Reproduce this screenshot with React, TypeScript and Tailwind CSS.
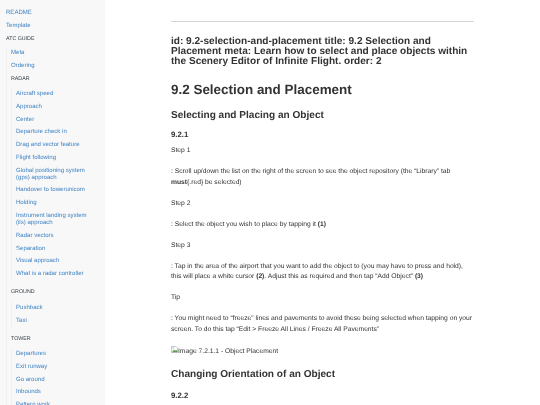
import React from 'react';

const NavLink: React.FC<{ label: string }> = ({ label }) => (
  <li className="py-[2.9px] leading-[7px] text-[6.05px] text-[#4183c4]">{label}</li>
);

const NavHeader: React.FC<{ label: string }> = ({ label }) => (
  <li className="py-[2.9px] leading-[7px] text-[5.3px] uppercase text-[#364149]">{label}</li>
);

const radarItems = [
  'Aircraft speed',
  'Approach',
  'Center',
  'Departure check in',
  'Drag and vector feature',
  'Flight following',
  'Global positioning system (gps) approach',
  'Handover to towerunicom',
  'Holding',
  'Instrument landing system (ils) approach',
  'Radar vectors',
  'Separation',
  'Visual approach',
  'What is a radar controller',
];

const towerItems = ['Departures', 'Exit runway', 'Go around', 'Inbounds', 'Pattern work'];

const Sidebar = () => (
  <aside className="w-[105px] shrink-0 h-full overflow-hidden bg-[#f8f8f8] pt-[7.5px] pl-[6px] pr-[17px]">
    <ul className="flex flex-col">
      <NavLink label="README" />
      <NavLink label="Template" />
      <NavHeader label="ATC Guide" />
      <ul className="mt-[1.75px] pl-[4px] border-l border-[#f0f0f0]">
        <NavLink label="Meta" />
        <NavLink label="Ordering" />
        <NavHeader label="Radar" />
        <ul className="mt-[2.2px] pl-[4px] border-l border-[#f0f0f0]">
          {radarItems.map((item) => (
            <NavLink key={item} label={item} />
          ))}
        </ul>
        <div className="h-[5px]" />
        <NavHeader label="Ground" />
        <ul className="mt-[3.25px] pl-[4px] border-l border-[#f0f0f0]">
          <NavLink label="Pushback" />
          <NavLink label="Taxi" />
        </ul>
        <div className="h-[5px]" />
        <NavHeader label="Tower" />
        <ul className="mt-[2.75px] pl-[4px] border-l border-[#f0f0f0]">
          {towerItems.map((item) => (
            <NavLink key={item} label={item} />
          ))}
        </ul>
      </ul>
    </ul>
  </aside>
);

const BrokenImage = () => (
  <svg width="7" height="7" viewBox="0 0 16 16" className="inline-block align-baseline">
    <path d="M1 1h10l4 4v10H1z" fill="#fff" stroke="#a0a0a0" strokeWidth="1.4" />
    <path d="M2 14l5-6 3 3 2-2 3 3v2H2z" fill="#5fa04e" />
    <path d="M3 3h4v3H3z" fill="#a8c8f0" />
  </svg>
);

const Para: React.FC<{ children: React.ReactNode }> = ({ children }) => (
  <p className="mb-[10.25px] text-[6.72px] leading-[10.75px] text-[#333]">{children}</p>
);

export default function App() {
  return (
    <div className="font-['Liberation_Sans',Arial,sans-serif] [text-rendering:geometricPrecision] blur-[0.4px] flex w-[540px] h-[405px] overflow-hidden bg-white">
      <Sidebar />
      <main className="flex-1 overflow-hidden pl-[66px] pr-[66px] pt-[21px]">
        <hr className="border-0 h-[1px] bg-[#d4d4d4] mb-[14.6px]" />
        <h2 className="text-[10.08px] leading-[10.3px] font-bold text-[#333] mb-[13.25px]">
          id: 9.2-selection-and-placement title: 9.2 Selection and Placement meta: Learn how to select and place objects within the Scenery Editor of Infinite Flight. order: 2
        </h2>
        <h1 className="text-[13.44px] leading-[18px] font-bold text-[#333] mb-[10px]">9.2 Selection and Placement</h1>
        <h2 className="text-[10.08px] leading-[14px] font-bold text-[#333] mb-[7px]">Selecting and Placing an Object</h2>
        <h4 className="text-[7.8px] leading-[9px] font-bold text-[#333] mb-[7.1px]">9.2.1</h4>
        <Para>Step 1</Para>
        <Para>
          : Scroll up/down the list on the right of the screen to see the object repository (the “Library” tab <strong>must</strong>{'{'}.red{'}'} be selected)
        </Para>
        <Para>Step 2</Para>
        <Para>
          : Select the object you wish to place by tapping it <strong>(1)</strong>
        </Para>
        <Para>Step 3</Para>
        <Para>
          : Tap in the area of the airport that you want to add the object to (you may have to press and hold), this will place a white cursor <strong>(2)</strong>. Adjust this as required and then tap “Add Object” <strong>(3)</strong>
        </Para>
        <Para>Tip</Para>
        <Para>
          : You might need to “freeze” lines and pavements to avoid these being selected when tapping on your screen. To do this tap “Edit &gt; Freeze All Lines / Freeze All Pavements”
        </Para>
        <Para>
          <BrokenImage />
          Image 7.2.1.1 - Object Placement
        </Para>
        <h2 className="text-[10.08px] leading-[14px] font-bold text-[#333] mt-[1.1px] mb-[8.5px]">Changing Orientation of an Object</h2>
        <h4 className="text-[7.8px] leading-[9px] font-bold text-[#333]">9.2.2</h4>
      </main>
    </div>
  );
}
